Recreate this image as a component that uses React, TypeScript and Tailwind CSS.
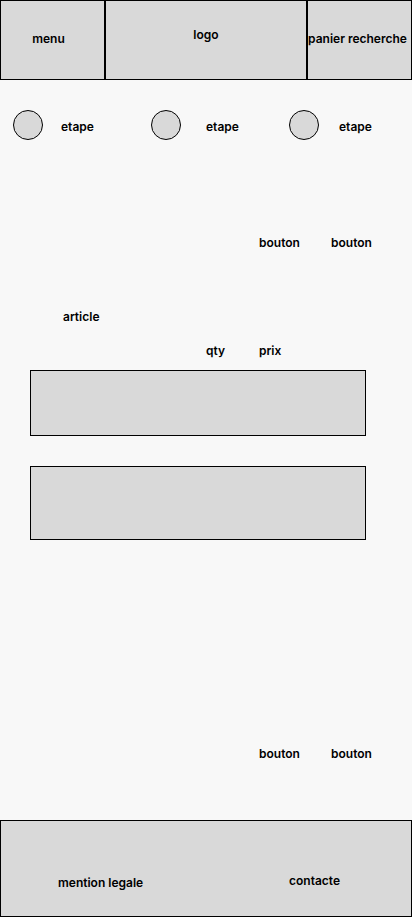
import React from "react";

const font = { fontFamily: "Inter, 'Noto Sans', sans-serif" };

function Step({ gap, last }: { gap: string; last?: boolean }) {
  return (
    <div className={`flex items-center shrink-0 ${last ? "" : "w-[138px]"}`}>
      <div className="w-[30px] h-[30px] shrink-0 rounded-full border border-black bg-[#d9d9d9]" />
      <span className={`${gap} mt-[3px]`}>etape</span>
    </div>
  );
}

export default function App() {
  return (
    <div
      className="w-[412px] min-h-[917px] bg-[#f8f8f8] text-black text-[12px] font-semibold leading-none flex flex-col"
      style={font}
    >
      <header className="flex h-[80px]">
        <div className="w-[105px] h-full border border-black bg-[#d9d9d9] flex items-center justify-center pb-[3px] pr-[8px]">
          menu
        </div>
        <div className="w-[202px] h-full border border-black bg-[#d9d9d9] flex items-center justify-center pb-[10px]">
          logo
        </div>
        <div className="w-[105px] h-full border border-black bg-[#d9d9d9] flex items-center justify-center whitespace-nowrap pb-[3px] pr-[4px]">
          panier recherche
        </div>
      </header>

      <div className="mt-[30px] h-[30px] flex items-center pl-[13px]">
        <Step gap="ml-[18px]" />
        <Step gap="ml-[25px]" />
        <Step gap="ml-[20px]" last />
      </div>

      <div className="mt-[94px] h-[16px] flex items-center pl-[259px] pt-[2px]">
        <span className="w-[72px]">bouton</span>
        <span>bouton</span>
      </div>

      <div className="mt-[58px] h-[16px] flex items-center pl-[63px] pt-[2px]">
        <span>article</span>
      </div>

      <div className="mt-[18px] h-[16px] flex items-center pl-[206px] pt-[2px]">
        <span className="w-[53px]">qty</span>
        <span>prix</span>
      </div>

      <div className="mt-[12px] ml-[30px] w-[336px] h-[66px] border border-black bg-[#d9d9d9]" />
      <div className="mt-[30px] ml-[30px] w-[336px] h-[74px] border border-black bg-[#d9d9d9]" />

      <div className="mt-[205px] h-[16px] flex items-center pl-[259px] pt-[2px]">
        <span className="w-[72px]">bouton</span>
        <span>bouton</span>
      </div>

      <footer className="mt-[59px] h-[97px] border border-black bg-[#d9d9d9] flex items-start pl-[57px]">
        <span className="w-[231px] mt-[56px]">mention legale</span>
        <span className="mt-[54px]">contacte</span>
      </footer>
    </div>
  );
}
